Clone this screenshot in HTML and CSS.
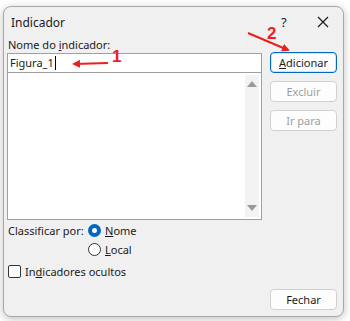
FILE: index.html
```html
<!DOCTYPE html>
<html lang="pt">
<head>
  <meta charset="UTF-8" />
  <title>Indicador</title>
  <link rel="stylesheet" href="styles.css">
</head>
<body>
  <div class="sheet">
    <div class="dialog">
      <div class="titlebar">
        <span class="title">Indicador</span>
        <span class="help">?</span>
        <span class="close">
          <svg width="12" height="12" viewBox="0 0 12 12"><path d="M1 1 L11 11 M11 1 L1 11" stroke="#1a1a1a" stroke-width="1.2"/></svg>
        </span>
      </div>

      <div class="content">
        <div class="left">
          <label class="field-label" for="nome">Nome do <u>i</u>ndicador:</label>
          <div class="name-input" id="nome">Figura_1<span class="caret"></span></div>
          <div class="list">
            <div class="list-body"></div>
            <div class="scroll">
              <span class="arrow up"></span>
              <span class="arrow down"></span>
            </div>
          </div>

          <div class="sort">
            <span class="sort-label">Classificar por:</span>
            <div class="radios">
              <div class="radio-row"><span class="radio checked"></span><span><u>N</u>ome</span></div>
              <div class="radio-row"><span class="radio"></span><span><u>L</u>ocal</span></div>
            </div>
          </div>

          <div class="check-row"><span class="checkbox"></span><span>In<u>d</u>icadores ocultos</span></div>
        </div>

        <div class="right">
          <button class="btn primary"><u>A</u>dicionar</button>
          <button class="btn disabled">Excluir</button>
          <button class="btn disabled">Ir para</button>
          <button class="btn close-btn">Fechar</button>
        </div>
      </div>
    </div>

    <svg class="marks" width="350" height="321" viewBox="0 0 350 321">
      <defs>
        <marker id="head" markerWidth="8" markerHeight="8" refX="6" refY="4" orient="auto" markerUnits="userSpaceOnUse">
          <path d="M0 0 L8 4 L0 8 Z" fill="#e8201e"/>
        </marker>
      </defs>
      <line x1="108" y1="63" x2="74" y2="64" stroke="#e8201e" stroke-width="2" marker-end="url(#head)"/>
      <text x="112" y="62" class="num">1</text>
      <line x1="248" y1="33" x2="288" y2="50" stroke="#e8201e" stroke-width="2" marker-end="url(#head)"/>
      <text x="267" y="39" class="num">2</text>
    </svg>
  </div>
</body>
</html>
```

FILE: styles.css
```css
body {
  margin: 0;
  background-color: #ffffff;
  font-family: "Noto Sans", "Open Sans", sans-serif;
  font-size: 11px;
  color: #1a1a1a;
}
.sheet {
  position: relative;
  width: 350px;
  height: 321px;
  overflow: hidden;
  padding-top: 6px;
  padding-left: 3px;
  box-sizing: border-box;
}
.dialog {
  width: 341px;
  height: 311px;
  box-sizing: border-box;
  border: 1px solid #a8a8a8;
  border-radius: 8px;
  background-color: #f0f0f0;
  box-shadow: 0 2px 8px rgba(0, 0, 0, 0.25);
  display: flex;
  flex-direction: column;
}
.titlebar {
  height: 30px;
  display: flex;
  align-items: center;
  padding-left: 7px;
}
.title {
  flex: 1;
  font-size: 12px;
}
.help {
  width: 20px;
  font-size: 13px;
  margin-right: 16px;
}
.close {
  width: 26px;
  display: flex;
}
.content {
  flex: 1;
  display: flex;
  gap: 8px;
  padding: 0 6px 5px 3px;
}
.left {
  width: 255px;
  display: flex;
  flex-direction: column;
}
.field-label {
  height: 16px;
  line-height: 16px;
  padding-left: 1px;
}
.name-input {
  height: 20px;
  box-sizing: border-box;
  border: 1px solid #a0a0a0;
  background-color: #ffffff;
  line-height: 18px;
  padding-left: 2px;
  display: flex;
  align-items: center;
}
.caret {
  width: 1px;
  height: 14px;
  background-color: #000000;
  margin-left: 1px;
}
.list {
  height: 147px;
  box-sizing: border-box;
  border: 1px solid #a0a0a0;
  border-top: none;
  background-color: #ffffff;
  display: flex;
  padding: 2px;
}
.list-body {
  flex: 1;
}
.scroll {
  width: 14px;
  display: flex;
  flex-direction: column;
  justify-content: space-between;
  align-items: center;
  padding: 6px 0;
  background-color: #f3f3f3;
}
.arrow {
  width: 0;
  height: 0;
  border-left: 5px solid transparent;
  border-right: 5px solid transparent;
}
.arrow.up {
  border-bottom: 6px solid #9a9a9a;
}
.arrow.down {
  border-top: 6px solid #9a9a9a;
}
.sort {
  display: flex;
  margin-top: 1px;
  padding-left: 1px;
}
.sort-label {
  width: 80px;
  line-height: 19px;
  white-space: nowrap;
}
.radios {
  display: flex;
  flex-direction: column;
}
.radio-row,
.check-row {
  display: flex;
  align-items: center;
  gap: 4px;
  height: 19px;
}
.radio {
  width: 13px;
  height: 13px;
  box-sizing: border-box;
  border: 1px solid #333333;
  border-radius: 50%;
  background-color: #ffffff;
}
.radio.checked {
  border: 4px solid #0067c0;
}
.check-row {
  margin-top: 3px;
  padding-left: 1px;
}
.checkbox {
  width: 13px;
  height: 13px;
  box-sizing: border-box;
  border: 1px solid #333333;
  border-radius: 2px;
  background-color: #ffffff;
}
u {
  text-underline-offset: 1px;
}
.right {
  width: 67px;
  display: flex;
  flex-direction: column;
  gap: 8px;
  padding-top: 15px;
}
.btn {
  height: 21px;
  box-sizing: border-box;
  border: 1px solid #d0d0d0;
  border-radius: 4px;
  background-color: #fdfdfd;
  font-family: inherit;
  font-size: 11px;
  color: #1a1a1a;
  padding: 0;
}
.btn.primary {
  border: 1px solid #0067c0;
  box-shadow: inset 0 0 0 1px #cde3f7;
}
.btn.disabled {
  color: #9d9d9d;
}
.btn.close-btn {
  margin-top: auto;
  margin-bottom: 1px;
}
.marks {
  position: absolute;
  left: 0;
  top: 0;
}
.num {
  font-family: "Liberation Sans", sans-serif;
  font-weight: bold;
  font-size: 17px;
  fill: #e8201e;
}
```
